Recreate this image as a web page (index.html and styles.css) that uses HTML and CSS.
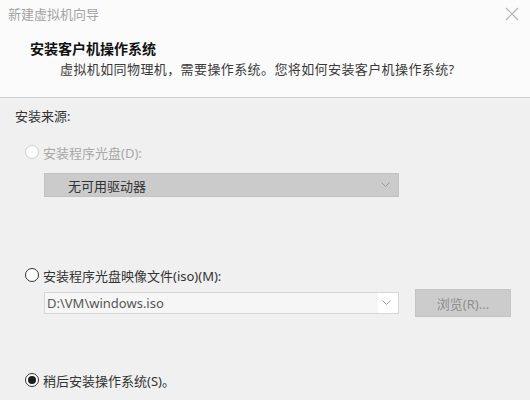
FILE: index.html
```html
<!DOCTYPE html>
<html lang="zh-CN">
<head>
<meta charset="utf-8">
<title>新建虚拟机向导</title>
<link rel="stylesheet" href="styles.css">
</head>
<body>
<div class="dialog">
  <div class="top">
    <div class="titlebar">
      <span class="wintitle">新建虚拟机向导</span>
      <svg class="close" width="14" height="14" viewBox="0 0 14 14"><path d="M1 1 L13 13 M13 1 L1 13" stroke="#b4b4b4" stroke-width="1.2" fill="none"/></svg>
    </div>
    <div class="head-title">安装客户机操作系统</div>
    <div class="head-sub">虚拟机如同物理机，需要操作系统。您将如何安装客户机操作系统?</div>
  </div>
  <div class="content">
    <div class="section-label">安装来源:</div>

    <div class="radio-row r1 disabled">
      <span class="radio"></span>
      <span class="label">安装程序光盘(D):</span>
    </div>
    <div class="select disabled-select">
      <span class="select-text">无可用驱动器</span>
      <svg class="chev" width="9" height="6" viewBox="0 0 9 6"><path d="M0.5 0.5 L4.5 4.5 L8.5 0.5" stroke="#9a9a9a" stroke-width="1" fill="none"/></svg>
    </div>

    <div class="radio-row r2">
      <span class="radio"></span>
      <span class="label">安装程序光盘映像文件(iso)(M):</span>
    </div>
    <div class="iso-row">
      <div class="combo">
        <span class="combo-text">D:\VM\windows.iso</span>
        <span class="combo-arrow">
          <svg width="9" height="6" viewBox="0 0 9 6"><path d="M0.5 0.5 L4.5 4.5 L8.5 0.5" stroke="#a0a0a0" stroke-width="1" fill="none"/></svg>
        </span>
      </div>
      <div class="btn">浏览(R)...</div>
    </div>

    <div class="radio-row r3">
      <span class="radio checked"></span>
      <span class="label">稍后安装操作系统(S)。</span>
    </div>
  </div>
</div>
</body>
</html>
```

FILE: styles.css
```css
* { box-sizing: border-box; }
html, body {
  margin: 0;
  padding: 0;
  width: 530px;
  height: 400px;
  overflow: hidden;
  background: #f0f0f0;
  font-family: "Noto Sans", "Noto Sans CJK SC", sans-serif;
  font-size: 13px;
  color: #333;
}
.dialog {
  width: 530px;
  height: 400px;
  display: flex;
  flex-direction: column;
}
.top {
  background: #fbfbfb;
  height: 98px;
  border-bottom: 1px solid #cfcfcf;
}
.titlebar {
  height: 30px;
  display: flex;
  align-items: center;
  justify-content: space-between;
  padding: 0 11px 2px 8px;
}
.wintitle {
  color: #a3a3a3;
  font-size: 13px;
  line-height: 28px;
}
.close { display: block; margin-top: 0; }
.head-title {
  margin-top: 9px;
  padding-left: 30px;
  font-size: 14px;
  font-weight: bold;
  line-height: 20px;
  color: #111;
}
.head-sub {
  padding-left: 60px;
  line-height: 20px;
  color: #3a3a3a;
  letter-spacing: 0.4px;
}
.content {
  flex: 1;
  padding-top: 8px;
}
.section-label {
  padding-left: 15px;
  line-height: 20px;
  color: #333;
}
.radio-row {
  display: flex;
  align-items: center;
  gap: 4px;
  padding-left: 25px;
  height: 20px;
  color: #333;
}
.r1 { margin-top: 16px; }
.r2 { margin-top: 68px; }
.r3 { margin-top: 53px; }
.radio {
  width: 14px;
  height: 14px;
  border-radius: 50%;
  border: 1px solid #333;
  background: #fff;
  display: flex;
  align-items: center;
  justify-content: center;
  flex: none;
}
.radio.checked::after {
  content: "";
  width: 8px;
  height: 8px;
  border-radius: 50%;
  background: #1e1e1e;
}
.disabled .radio { border-color: #cdcdcd; }
.disabled .label { color: #a8a8a8; }
.select {
  margin: 11px 0 0 44px;
  width: 355px;
  height: 24px;
  display: flex;
  align-items: center;
  justify-content: space-between;
  padding: 0 8px 0 23px;
}
.disabled-select {
  background: #cbcbcb;
  border: 1px solid #c2c2c2;
  color: #333;
}
.chev { display: block; }
.iso-row {
  margin: 4px 0 0 44px;
  display: flex;
  align-items: center;
  gap: 16px;
  height: 28px;
}
.combo {
  width: 355px;
  height: 22px;
  border: 1px solid #d6d6d6;
  background: #fff;
  display: flex;
  align-items: stretch;
}
.combo-text {
  flex: 1;
  background: #f6f6f6;
  padding-left: 2px;
  line-height: 20px;
  color: #555;
}
.combo-arrow {
  width: 20px;
  display: flex;
  align-items: center;
  justify-content: center;
  padding-right: 4px;
}
.btn {
  width: 96px;
  height: 28px;
  background: #cccccc;
  border: 1px solid #c4c4c4;
  color: #8e8e8e;
  display: flex;
  align-items: center;
  justify-content: center;
}
```
